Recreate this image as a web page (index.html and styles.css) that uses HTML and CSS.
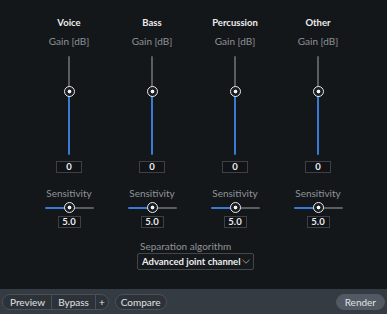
FILE: index.html
```html
<!DOCTYPE html>
<html>
<head>
<meta charset="utf-8">
<link rel="stylesheet" href="styles.css">
</head>
<body>
<div class="app">
  <div class="main">
    <div class="columns">
      <div class="col">
        <div class="title">Voice</div>
        <div class="label">Gain [dB]</div>
        <div class="vslider"><div class="vtrack"></div><div class="thumb vthumb"></div></div>
        <div class="valbox gainbox">0</div>
        <div class="label sens">Sensitivity</div>
        <div class="hslider"><div class="htrack"></div><div class="thumb hthumb"></div></div>
        <div class="valbox sensbox">5.0</div>
      </div>
      <div class="col">
        <div class="title">Bass</div>
        <div class="label">Gain [dB]</div>
        <div class="vslider"><div class="vtrack"></div><div class="thumb vthumb"></div></div>
        <div class="valbox gainbox">0</div>
        <div class="label sens">Sensitivity</div>
        <div class="hslider"><div class="htrack"></div><div class="thumb hthumb"></div></div>
        <div class="valbox sensbox">5.0</div>
      </div>
      <div class="col">
        <div class="title">Percussion</div>
        <div class="label">Gain [dB]</div>
        <div class="vslider"><div class="vtrack"></div><div class="thumb vthumb"></div></div>
        <div class="valbox gainbox">0</div>
        <div class="label sens">Sensitivity</div>
        <div class="hslider"><div class="htrack"></div><div class="thumb hthumb"></div></div>
        <div class="valbox sensbox">5.0</div>
      </div>
      <div class="col">
        <div class="title">Other</div>
        <div class="label">Gain [dB]</div>
        <div class="vslider"><div class="vtrack"></div><div class="thumb vthumb"></div></div>
        <div class="valbox gainbox">0</div>
        <div class="label sens">Sensitivity</div>
        <div class="hslider"><div class="htrack"></div><div class="thumb hthumb"></div></div>
        <div class="valbox sensbox">5.0</div>
      </div>
    </div>
    <div class="algo">
      <div class="label algolabel">Separation algorithm</div>
      <div class="dropdown">
        <span class="ddtext">Advanced joint channel</span>
        <svg class="chev" width="8" height="5" viewBox="0 0 8 5"><path d="M0.5 0.8 L4 4.2 L7.5 0.8" fill="none" stroke="#8d9196" stroke-width="1"/></svg>
      </div>
    </div>
  </div>
  <div class="bar">
    <div class="group">
      <div class="gbtn">Preview</div>
      <div class="gbtn">Bypass</div>
      <div class="gbtn plus">+</div>
    </div>
    <div class="btn">Compare</div>
    <div class="spacer"></div>
    <div class="btn render">Render</div>
  </div>
</div>
</body>
</html>
```

FILE: styles.css
```css
* { box-sizing: border-box; }
html, body { margin: 0; padding: 0; }
body {
  background: #14171a;
  font-family: Lato, "Noto Sans", sans-serif;
  font-size: 10px;
  color: #e4e5e6;
  width: 387px;
  height: 314px;
  overflow: hidden;
}
.app { display: flex; flex-direction: column; height: 314px; }
.main { height: 289px; display: flex; flex-direction: column; align-items: center; padding-top: 17px; }
.columns { display: flex; justify-content: center; width: 100%; }
.col { width: 83px; display: flex; flex-direction: column; align-items: center; }
.title { font-weight: 700; font-size: 9.5px; line-height: 12px; height: 12px; color: #eceded; white-space: nowrap; }
.label { color: #8f9398; line-height: 12px; height: 12px; white-space: nowrap; }
.col .label:nth-child(2) { margin-top: 6px; }
.vslider { position: relative; width: 11px; height: 99px; margin-top: 8.5px; display: flex; justify-content: center; }
.vtrack { width: 2px; height: 100%; background: linear-gradient(to bottom, #5a5e63 0, #5a5e63 36px, #3a7ad6 36px, #3a7ad6 100%); border-radius: 1px; }
.thumb {
  position: absolute;
  width: 11px; height: 11px;
  border-radius: 50%;
  border: 1.5px solid #e9eaeb;
  background: radial-gradient(circle, #f2f2f2 0, #f2f2f2 1.6px, #1a1d21 2.2px);
}
.vthumb { left: 0; top: 30.5px; }
.valbox {
  border: 1px solid #3d4146;
  background: #111316;
  color: #eceded;
  height: 12px;
  line-height: 10px;
  text-align: center;
  font-weight: 700;
  font-size: 9.5px;
}
.gainbox { width: 26px; margin-top: 6px; }
.sens { margin-top: 14.5px; }
.hslider { position: relative; width: 49px; height: 11px; margin-top: 3px; display: flex; align-items: center; }
.htrack { width: 100%; height: 2px; background: linear-gradient(to right, #3a7ad6 0, #3a7ad6 25px, #5a5e63 25px); border-radius: 1px; }
.hthumb { left: 19.5px; top: 0; }
.sensbox { width: 23px; margin-top: 2.5px; }
.algo { display: flex; flex-direction: column; align-items: flex-start; margin-top: 12px; margin-left: 4px; }
.algolabel { padding-left: 3px; }
.dropdown {
  margin-top: 1px;
  height: 17px;
  width: 117px;
  border: 1px solid #43474c;
  border-radius: 2px;
  background: #16191c;
  display: flex; align-items: center; justify-content: space-between;
  padding: 0 3px 0 4px;
  color: #eceded;
}
.ddtext { font-weight: 700; font-size: 9.5px; white-space: nowrap; }
.chev { margin-top: 1px; }
.bar {
  height: 25px;
  background: #353b43;
  display: flex;
  align-items: center;
  padding: 0 2px;
  gap: 6px;
}
.group {
  display: flex;
  height: 16px;
  border: 1px solid #4a5058;
  border-radius: 8px;
  background: #2d3239;
  overflow: hidden;
}
.gbtn {
  line-height: 14px;
  padding: 0 6px;
  color: #e0e2e4;
  border-left: 1px solid #4a5058;
  white-space: nowrap;
}
.gbtn:first-child { border-left: none; padding-left: 7px; }
.gbtn.plus { padding: 0 3px; }
.btn {
  height: 16px;
  line-height: 14px;
  border: 1px solid #4a5058;
  border-radius: 8px;
  background: #2d3239;
  padding: 0 5px;
  color: #e0e2e4;
  white-space: nowrap;
}
.spacer { flex: 1; }
.render { background: #525963; border-color: #525963; padding: 0 8px; }
```
